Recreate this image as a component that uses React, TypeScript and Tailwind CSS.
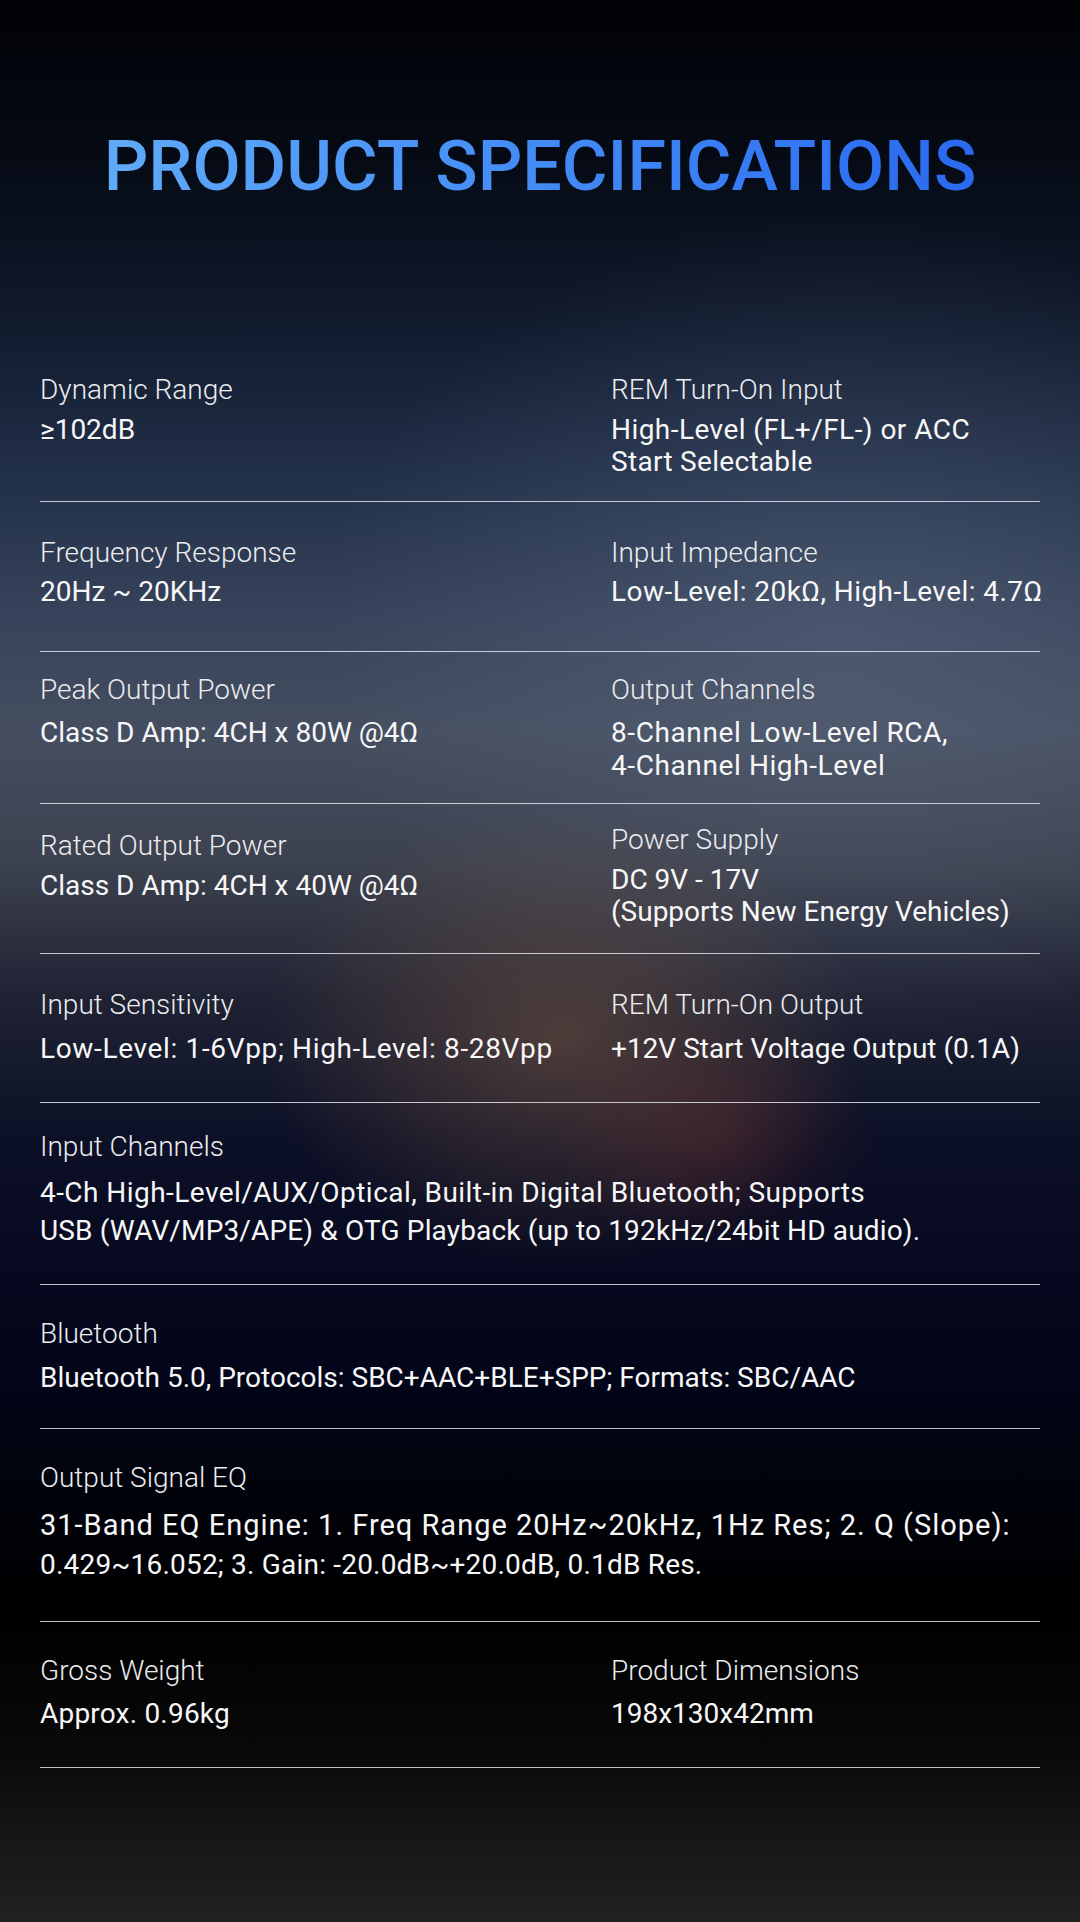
import React from 'react';

type Cell = { label: string; value: string[]; wide?: boolean; fit?: string[]; shift?: string };
type Row = { cells: Cell[]; box: string; gap: string; lead: string };

const rows: Row[] = [
  {
    box: 'h-[162px] pt-[34px]',
    gap: 'mt-[8px]',
    lead: 'leading-[32px]',
    cells: [
      { label: 'Dynamic Range', value: ['≥102dB'] },
      {
        label: 'REM Turn-On Input',
        value: ['High-Level (FL+/FL-) or ACC', 'Start Selectable'],
        fit: ['tracking-[0.45px]', 'tracking-[0.3px]'],
      },
    ],
  },
  {
    box: 'h-[150px] pt-[35px]',
    gap: 'mt-[7px]',
    lead: 'leading-[32px]',
    cells: [
      { label: 'Frequency Response', value: ['20Hz ~ 20KHz'] },
      { label: 'Input Impedance', value: ['Low-Level: 20kΩ, High-Level: 4.7Ω'], fit: ['tracking-[0.45px]'] },
    ],
  },
  {
    box: 'h-[152px] pt-[22px]',
    gap: 'mt-[10px]',
    lead: 'leading-[33px]',
    cells: [
      { label: 'Peak Output Power', value: ['Class D Amp: 4CH x 80W @4Ω'] },
      {
        label: 'Output Channels',
        value: ['8-Channel Low-Level RCA,', '4-Channel High-Level'],
        fit: ['tracking-[0.6px]', 'tracking-[0.6px]'],
      },
    ],
  },
  {
    box: 'h-[150px] pt-[23px]',
    gap: 'mt-[8px]',
    lead: 'leading-[32px]',
    cells: [
      { label: 'Rated Output Power', value: ['Class D Amp: 4CH x 40W @4Ω'], shift: 'pt-[3px]' },
      { label: 'Power Supply', value: ['DC 9V - 17V', '(Supports New Energy Vehicles)'], shift: '-mt-[3px]' },
    ],
  },
  {
    box: 'h-[149px] pt-[35px]',
    gap: 'mt-[12px]',
    lead: 'leading-[32px]',
    cells: [
      { label: 'Input Sensitivity', value: ['Low-Level: 1-6Vpp; High-Level: 8-28Vpp'], fit: ['tracking-[0.65px]'] },
      { label: 'REM Turn-On Output', value: ['+12V Start Voltage Output (0.1A)'] },
    ],
  },
  {
    box: 'h-[182px] pt-[28px]',
    gap: 'mt-[11px]',
    lead: 'leading-[38px]',
    cells: [
      {
        label: 'Input Channels',
        wide: true,
        value: [
          '4-Ch High-Level/AUX/Optical, Built-in Digital Bluetooth; Supports',
          'USB (WAV/MP3/APE) & OTG Playback (up to 192kHz/24bit HD audio).',
        ],
        fit: ['tracking-[0.45px]', 'tracking-[0.15px]'],
      },
    ],
  },
  {
    box: 'h-[144px] pt-[33px]',
    gap: 'mt-[12px]',
    lead: 'leading-[32px]',
    cells: [
      {
        label: 'Bluetooth',
        wide: true,
        value: ['Bluetooth 5.0, Protocols: SBC+AAC+BLE+SPP; Formats: SBC/AAC'],
      },
    ],
  },
  {
    box: 'h-[193px] pt-[33px]',
    gap: 'mt-[12px]',
    lead: 'leading-[39px]',
    cells: [
      {
        label: 'Output Signal EQ',
        wide: true,
        value: [
          '31-Band EQ Engine: 1. Freq Range 20Hz~20kHz, 1Hz Res; 2. Q (Slope):',
          '0.429~16.052; 3. Gain: -20.0dB~+20.0dB, 0.1dB Res.',
        ],
        fit: ['text-[29px] tracking-[1px]', 'tracking-[0.2px]'],
      },
    ],
  },
  {
    box: 'h-[146px] pt-[33px]',
    gap: 'mt-[11px]',
    lead: 'leading-[32px]',
    cells: [
      { label: 'Gross Weight', value: ['Approx. 0.96kg'], fit: ['tracking-[0.2px]'] },
      { label: 'Product Dimensions', value: ['198x130x42mm'] },
    ],
  },
];

const SpecCell = ({ cell, gap, lead }: { cell: Cell; gap: string; lead: string }) => (
  <div className={`${cell.wide ? 'col-span-2' : ''} ${cell.shift ?? ''}`}>
    <div className="text-[28px] font-light leading-[32px] text-[#ececef]">{cell.label}</div>
    <div className={`${gap} ${lead} text-[28px] font-normal text-[#f7f7f8]`}>
      {cell.value.map((line, i) => (
        <div key={line} className={`whitespace-nowrap ${cell.fit?.[i] ?? ''}`}>
          {line}
        </div>
      ))}
    </div>
  </div>
);

export default function App() {
  return (
    <div
      className="relative min-h-screen w-full overflow-hidden bg-[radial-gradient(ellipse_300px_230px_at_52%_54%,rgba(120,86,66,0.55),rgba(120,86,66,0)),radial-gradient(ellipse_520px_420px_at_78%_33%,rgba(110,124,150,0.32),rgba(110,124,150,0)),radial-gradient(ellipse_160px_120px_at_66%_59%,rgba(110,40,40,0.35),rgba(110,40,40,0)),linear-gradient(180deg,#010206_0%,#050a14_8%,#111b2e_17%,#223049_25%,#36435a_32%,#454e60_38%,#3c414e_45%,#1e2233_52%,#0d1127_59%,#070a20_65%,#03051a_71%,#01030c_77%,#000000_84%,#09090a_91%,#222222_100%)]"
      style={{ fontFamily: 'Roboto, "Liberation Sans", sans-serif' }}
    >
      {/* Title */}
      <div className="flex justify-center pt-[131px]">
        <h1 className="bg-gradient-to-r from-[#60aaf8] to-[#2a69f1] bg-clip-text text-[70px] font-medium leading-none text-transparent">
          PRODUCT SPECIFICATIONS
        </h1>
      </div>

      {/* Spec table */}
      <div className="mt-[139px] px-10 pb-[155px]">
        {rows.map((row, i) => (
          <div
            key={i}
            className={`grid grid-cols-[571px_1fr] border-b border-[rgba(225,228,236,0.85)] ${row.box}`}
          >
            {row.cells.map((cell) => (
              <SpecCell key={cell.label} cell={cell} gap={row.gap} lead={row.lead} />
            ))}
          </div>
        ))}
      </div>
    </div>
  );
}
